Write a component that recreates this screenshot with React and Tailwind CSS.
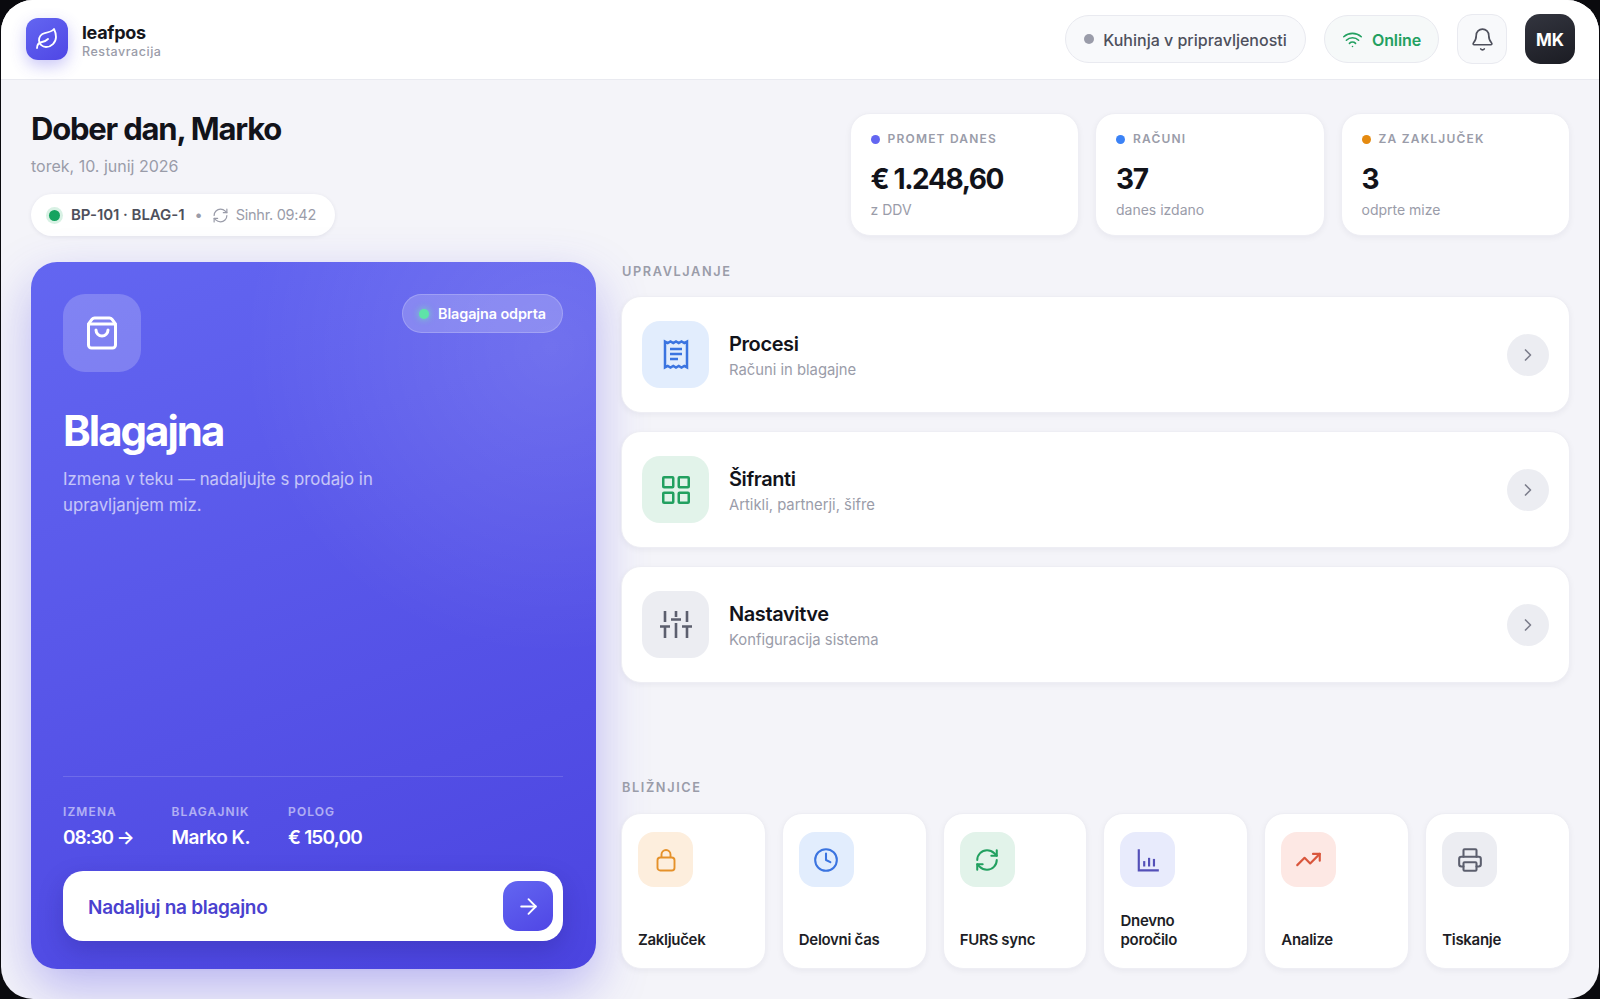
import React from "react";
import { Leaf, ShoppingBag, Clock, RefreshCw, TrendingUp, Printer, Bell, Wifi, ChevronRight, ArrowRight } from "lucide-react";

const stats = [
  { dot: "bg-[#6366f1]", label: "PROMET DANES", value: "€ 1.248,60", sub: "z DDV" },
  { dot: "bg-[#3b82f6]", label: "RAČUNI", value: "37", sub: "danes izdano" },
  { dot: "bg-[#e58a0f]", label: "ZA ZAKLJUČEK", value: "3", sub: "odprte mize" },
];

function ReceiptIcon() {
  return (
    <svg width="26" height="31" viewBox="0 0 26 31" fill="none" stroke="currentColor" strokeWidth="2.5">
      <path d="M2 2.5l2.75 1.5 2.75-1.5 2.75 1.5 2.75-1.5 2.75 1.5 2.75-1.5 2.75 1.5 2.75-1.5v26l-2.75-1.5-2.75 1.5-2.75-1.5-2.75 1.5-2.75-1.5-2.75 1.5-2.75-1.5-2.75 1.5z" />
      <path d="M7 10h12M7 15h12M7 20h8" />
    </svg>
  );
}

function GridIcon() {
  return (
    <svg width="28" height="28" viewBox="0 0 28 28" fill="none" stroke="currentColor" strokeWidth="2.5">
      <rect x="1.25" y="1.25" width="10" height="10" rx="0.8" />
      <rect x="16.75" y="1.25" width="10" height="10" rx="0.8" />
      <rect x="1.25" y="16.75" width="10" height="10" rx="0.8" />
      <rect x="16.75" y="16.75" width="10" height="10" rx="0.8" />
    </svg>
  );
}

function SlidersIcon() {
  return (
    <svg width="32" height="27" viewBox="0 0 32 27" fill="none" stroke="currentColor" strokeWidth="2.6">
      <path d="M5 0v11M0 15.5h10M5 15.5V27" />
      <path d="M16 0v6M11 8.5h10M16 12v15" />
      <path d="M27 0v11M22 15.5h10M27 15.5V27" />
    </svg>
  );
}

function LockIcon({ size, strokeWidth }) {
  return (
    <svg width={size} height={size} viewBox="0 0 24 24" fill="none" stroke="currentColor" strokeWidth={strokeWidth}>
      <rect x="3.5" y="9.5" width="17" height="13" rx="2.8" />
      <path d="M7.5 9.5V6.5a4.5 4.5 0 0 1 9 0v3" />
    </svg>
  );
}

function BarsIcon({ size }) {
  return (
    <svg viewBox="0 0 24 24" width={size} height={size} fill="none" stroke="currentColor" strokeWidth="2">
      <path d="M3.5 2v19.5H22" />
      <path d="M8.5 18v-5" />
      <path d="M13 18v-8" />
      <path d="M17.5 18v-7" />
    </svg>
  );
}

const manage = [
  { Icon: ReceiptIcon, bg: "bg-[#e2edfd]", color: "text-[#3b74e0]", title: "Procesi", sub: "Računi in blagajne" },
  { Icon: GridIcon, bg: "bg-[#e2f3ea]", color: "text-[#22a060]", title: "Šifranti", sub: "Artikli, partnerji, šifre" },
  { Icon: SlidersIcon, bg: "bg-[#ecedf2]", color: "text-[#5c5f6e]", title: "Nastavitve", sub: "Konfiguracija sistema" },
];

const shortcuts = [
  { Icon: LockIcon, size: 24, bg: "bg-[#fdeedd]", color: "text-[#e5912a]", label: "Zaključek" },
  { Icon: Clock, size: 26, bg: "bg-[#e2edfd]", color: "text-[#3b74e0]", label: "Delovni čas" },
  { Icon: RefreshCw, size: 26, bg: "bg-[#e2f3ea]", color: "text-[#22a060]", label: "FURS sync" },
  { Icon: BarsIcon, size: 26, bg: "bg-[#e8ebfc]", color: "text-[#5450b8]", label: "Dnevno poročilo" },
  { Icon: TrendingUp, size: 27, bg: "bg-[#fde8e4]", color: "text-[#d9563c]", label: "Analize" },
  { Icon: Printer, size: 26, bg: "bg-[#ecedf2]", color: "text-[#5c5f6e]", label: "Tiskanje" },
];

const meta = [
  { k: "IZMENA", v: "08:30 →", t: "tracking-[-1.1px]" },
  { k: "BLAGAJNIK", v: "Marko K.", t: "tracking-[-0.5px]" },
  { k: "POLOG", v: "€ 150,00", t: "tracking-[-0.8px]" },
];

export default function App() {
  return (
    <div className="w-[1600px] h-[999px] bg-[#0a0a0e] px-px overflow-hidden font-['Inter',sans-serif]">
      <div className="h-full rounded-[32px] overflow-hidden bg-[#f4f4f9] flex flex-col">
        <header className="h-[80px] shrink-0 bg-white border-b border-[#e9eaf0] flex items-center pl-[25px] pr-[24px] pb-px">
          <div className="w-[42px] h-[42px] rounded-[12px] bg-[linear-gradient(145deg,#6366f1,#4f46e5)] shadow-[0_6px_16px_rgba(79,70,229,0.3)] flex items-center justify-center text-white">
            <Leaf size={24} strokeWidth={1.8} />
          </div>
          <div className="ml-[14px] mt-[3px]">
            <div className="text-[18px] leading-[22px] font-bold text-[#15161c] tracking-[-0.3px]">leafpos</div>
            <div className="text-[12.5px] leading-[15px] font-medium text-[#9a9ca9] tracking-[0.55px]">Restavracija</div>
          </div>
          <div className="ml-auto flex items-center gap-[18px]">
            <div className="h-[48px] w-[241px] rounded-full bg-[#f8f9fb] border border-[#e9eaf0] flex items-center justify-center gap-[9px]">
              <span className="w-[10px] h-[10px] rounded-full bg-[#9a9ca9]" />
              <span className="pt-[2px] text-[16px] font-medium text-[#4e505c] tracking-[0px]">Kuhinja v pripravljenosti</span>
            </div>
            <div className="h-[48px] w-[115px] rounded-full bg-[#f6f9f9] border border-[#e9eaf0] flex items-center justify-center gap-[9px] text-[#22a060]">
              <Wifi size={21} strokeWidth={1.8} />
              <span className="pt-[2px] text-[16px] font-semibold tracking-[-0.1px]">Online</span>
            </div>
            <div className="w-[50px] h-[50px] rounded-[15px] bg-[#f8f9fb] border border-[#e9eaf0] flex items-center justify-center text-[#4e505c]">
              <Bell size={25} strokeWidth={1.6} />
            </div>
            <div className="w-[50px] h-[50px] pt-[3px] rounded-[15px] bg-[linear-gradient(160deg,#33353f,#1b1c23)] flex items-center justify-center text-white text-[17px] font-bold">MK</div>
          </div>
        </header>

        <main className="flex-1 min-h-0 pt-[33px] pb-[30px] pl-[30px] pr-[29px] flex flex-col gap-[26px]">
          <div className="flex justify-between items-start h-[123px]">
            <div>
              <h1 className="text-[31px] leading-[32px] font-bold text-[#12131a] tracking-[-1.2px]">Dober dan, Marko</h1>
              <div className="mt-[10px] text-[16px] leading-[22px] text-[#9a9ca9]">torek, 10. junij 2026</div>
              <div className="mt-[17px] h-[42px] w-[304px] rounded-full bg-white shadow-[0_1px_4px_rgba(20,20,60,0.08)] flex items-center pl-[18px] text-[14.5px]">
                <span className="w-[11px] h-[11px] rounded-full bg-[#16a35f] ring-[3px] ring-[#d8f1e4]" />
                <span className="ml-[11px] text-[15px] font-semibold text-[#4e505c] tracking-[-0.05px]">BP-101 · BLAG-1</span>
                <span className="ml-[10px] text-[#9a9ca9]">•</span>
                <RefreshCw size={17} strokeWidth={1.7} className="ml-[9px] text-[#9a9ca9]" />
                <span className="ml-[7px] text-[#9a9ca9] tracking-[-0.25px]">Sinhr. 09:42</span>
              </div>
            </div>
            <div className="flex gap-[16px]">
              {stats.map((s) => (
                <div key={s.label} className="w-[229.5px] h-[123px] rounded-[20px] bg-white border border-[#eeeef4] shadow-[0_2px_6px_rgba(20,20,60,0.05)] px-[20px] pt-[17px]">
                  <div className="flex items-center gap-[8px]">
                    <span className={`w-[9px] h-[9px] rounded-full ${s.dot}`} />
                    <span className="text-[12px] leading-[16px] font-semibold tracking-[1.2px] text-[#9a9ca9]">{s.label}</span>
                  </div>
                  <div className="mt-[14px] text-[28px] leading-[36px] font-bold text-[#12131a] tracking-[-1.4px]">{s.value}</div>
                  <div className="mt-[4px] text-[14px] leading-[18px] text-[#9a9ca9]">{s.sub}</div>
                </div>
              ))}
            </div>
          </div>

          <div className="flex-1 min-h-0 grid grid-cols-[565px_1fr] gap-[25px]">
            <section className="rounded-[26px] pl-[32px] pr-[33px] pt-[32px] pb-[28px] flex flex-col bg-[radial-gradient(circle_at_92%_12%,rgba(255,255,255,0.13),rgba(255,255,255,0)_38%),linear-gradient(160deg,#6366f1,#4b44e0)] shadow-[0_20px_50px_rgba(79,70,229,0.35)]">
              <div className="flex justify-between items-start">
                <div className="w-[78px] h-[78px] rounded-[22px] bg-white/20 flex items-center justify-center text-white">
                  <ShoppingBag size={36} strokeWidth={2} />
                </div>
                <div className="h-[39px] w-[161px] rounded-full bg-white/20 border border-white/20 flex items-center justify-center gap-[9px]">
                  <span className="w-[10px] h-[10px] rounded-full bg-[#5fe3a8] shadow-[0_0_7px_rgba(110,231,183,0.9)]" />
                  <span className="text-[14.4px] font-semibold text-white tracking-[-0.1px]">Blagajna odprta</span>
                </div>
              </div>
              <h2 className="mt-[34px] text-[42px] leading-[50px] font-bold text-white tracking-[-2px]">Blagajna</h2>
              <p className="mt-[10px] w-[340px] text-[16.75px] leading-[26px] text-white/65">Izmena v teku — nadaljujte s prodajo in upravljanjem miz.</p>
              <div className="mt-auto border-t border-white/15 pt-[27px]">
                <div className="flex gap-[38px]">
                  {meta.map((m) => (
                    <div key={m.k}>
                      <div className="text-[12px] leading-[16px] font-semibold tracking-[1.1px] text-white/55">{m.k}</div>
                      <div className={`mt-[6px] text-[19px] leading-[24px] font-semibold text-white ${m.t}`}>{m.v}</div>
                    </div>
                  ))}
                </div>
                <div className="mt-[21px] h-[70px] rounded-[20px] bg-white shadow-[0_10px_24px_rgba(30,25,120,0.25)] flex items-center justify-between pl-[25px] pr-[10px]">
                  <span className="pt-[4px] text-[19px] font-semibold text-[#4a41cf] tracking-[-0.3px]">Nadaljuj na blagajno</span>
                  <span className="w-[50px] h-[50px] rounded-[15px] bg-[linear-gradient(150deg,#6366f1,#4f46e5)] flex items-center justify-center text-white">
                    <ArrowRight size={25} strokeWidth={1.8} />
                  </span>
                </div>
              </div>
            </section>

            <section className="flex flex-col justify-between min-w-0">
              <div>
                <div className="mt-[2px] ml-px text-[12.75px] leading-[16px] font-semibold tracking-[1.6px] text-[#9a9ca9]">UPRAVLJANJE</div>
                <div className="mt-[16px] flex flex-col gap-[18px]">
                  {manage.map(({ Icon, bg, color, title, sub }) => (
                    <div key={title} className="h-[117px] rounded-[20px] bg-white border border-[#eeeef4] shadow-[0_2px_6px_rgba(20,20,60,0.05)] flex items-center px-[20px]">
                      <div className={`w-[67px] h-[67px] rounded-[18px] flex items-center justify-center ${bg} ${color}`}>
                        <Icon />
                      </div>
                      <div className="ml-[20px]">
                        <div className="pt-[2px] text-[20px] leading-[26px] font-semibold text-[#12131a] tracking-[-0.4px]">{title}</div>
                        <div className="mt-[3px] text-[14.8px] leading-[20px] text-[#9a9ca9]">{sub}</div>
                      </div>
                      <div className="ml-auto w-[42px] h-[42px] rounded-full bg-[#ecedf2] flex items-center justify-center text-[#7c7e8c]">
                        <ChevronRight size={20} strokeWidth={2} />
                      </div>
                    </div>
                  ))}
                </div>
              </div>
              <div>
                <div className="mt-[1px] ml-px text-[12.75px] leading-[16px] font-semibold tracking-[1.6px] text-[#9a9ca9]">BLIŽNJICE</div>
                <div className="mt-[17px] grid grid-cols-6 gap-[16px]">
                  {shortcuts.map(({ Icon, size, bg, color, label }) => (
                    <div key={label} className="h-[156px] rounded-[20px] bg-white border border-[#eeeef4] shadow-[0_2px_6px_rgba(20,20,60,0.05)] pl-[16px] pr-[16px] pt-[18px] pb-[19px] flex flex-col justify-between">
                      <div className={`w-[55px] h-[55px] rounded-[16px] flex items-center justify-center ${bg} ${color}`}>
                        <Icon size={size} strokeWidth={1.9} />
                      </div>
                      <div className="text-[15px] leading-[19px] font-semibold text-[#1d1e26] tracking-[-0.3px]">{label}</div>
                    </div>
                  ))}
                </div>
              </div>
            </section>
          </div>
        </main>
      </div>
    </div>
  );
}
